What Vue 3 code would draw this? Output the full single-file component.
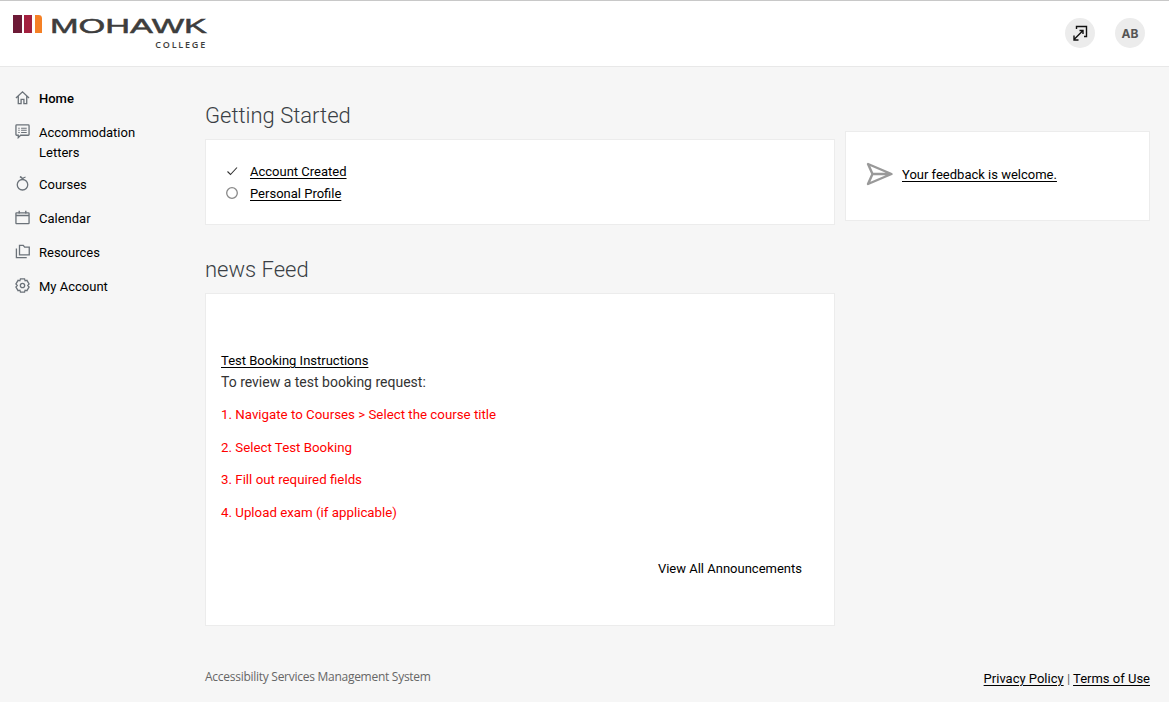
<script setup>
const nav = [
  { label: 'Home', icon: 'home', active: true },
  { label: 'Accommodation Letters', icon: 'letters' },
  { label: 'Courses', icon: 'apple' },
  { label: 'Calendar', icon: 'calendar' },
  { label: 'Resources', icon: 'folder' },
  { label: 'My Account', icon: 'gear' }
]
const steps = ['1. Navigate to Courses > Select the course title', '2. Select Test Booking', '3. Fill out required fields', '4. Upload exam (if applicable)']
</script>

<template>
  <div class="page">
    <header class="header">
      <div class="logo">
        <svg width="30" height="18" viewBox="0 0 30 18" class="bars">
          <rect x="0" y="0" width="9" height="18" fill="#6d1a36" />
          <rect x="11" y="0" width="8" height="18" fill="#a3203f" />
          <path d="M22 0h3.500a3.500 3.500 0 0 1 3.500 3.500V18h-7z" fill="#f58025" />
        </svg>
        <div class="wordmark">
          <svg width="156" height="22" viewBox="0 0 156 22" overflow="visible">
            <text x="-2" y="18" textLength="157" lengthAdjust="spacingAndGlyphs" class="mohawk">MOHAWK</text>
          </svg>
          <span class="college">COLLEGE</span>
        </div>
      </div>
      <div class="actions">
        <button class="round">
          <svg width="16" height="16" viewBox="0 0 16 16" fill="none" stroke="#111" stroke-width="1.400">
            <path d="M4.500 4V1.500h10V11.500H12" />
            <path d="M2 14.500L10.500 6M7.500 5.500H11V9M2 10.500V15H6.500" />
          </svg>
        </button>
        <button class="round initials">AB</button>
      </div>
    </header>

    <div class="body">
      <nav class="sidebar">
        <a v-for="item in nav" :key="item.label" class="nav-item" :class="{ active: item.active }">
          <svg class="nav-icon" width="15" height="15" viewBox="0 0 16 16" fill="none" stroke="#6b7279" stroke-width="1.400">
            <template v-if="item.icon === 'home'">
              <path d="M1 8.500L8 2l7 6.500M3.500 6.500V14.500h3v-4.500h3v4.500h3V6.500" />
            </template>
            <template v-else-if="item.icon === 'letters'">
              <path d="M1.800 1h12.400a.8.8 0 0 1 .8.800v9.400a.8.8 0 0 1-.8.800H6l-2.500 2.500V12H1.800a.8.800 0 0 1-.8-.8V1.800a.8.800 0 0 1 .8-.8z" />
              <path d="M3.500 4.500h1.500M6.500 4.500h6M3.500 6.700h1.500M6.500 6.700h6M3.500 9h1.500M6.500 9h6" stroke-width="1.100" />
            </template>
            <template v-else-if="item.icon === 'apple'">
              <circle cx="8" cy="9.300" r="5.600" />
              <path d="M8 3.700C8 2.500 7 1.300 5.200.8M8 3.700c.3-1.300 1.500-2.300 3.200-2.500" />
            </template>
            <template v-else-if="item.icon === 'calendar'">
              <rect x="1" y="3" width="14" height="11.500" rx=".6" />
              <path d="M1 5.800h14M4.500 .8v3M11.500 .8v3" stroke-width="1.500" />
            </template>
            <template v-else-if="item.icon === 'folder'">
              <path d="M4.800 3.200V1.500h4l1.500 1.800h4.900V11.500H4.800z" />
              <path d="M1.500 4.800V14.500H12.500" />
            </template>
            <template v-else>
              <circle cx="8" cy="8" r="2.300" />
              <path d="M5.800 1h4.400l.6 2 1.900-.5L15 6.300 13.600 8l1.400 1.700-2.300 3.800-1.900-.5-.6 2H5.800l-.6-2-1.900.5L1 9.700 2.400 8 1 6.300l2.300-3.800 1.900.5z" />
            </template>
          </svg>
          <span>{{ item.label }}</span>
        </a>
      </nav>

      <div class="content">
        <div class="columns">
          <main class="left">
            <h2 class="title">Getting Started</h2>
            <section class="card started">
              <div class="check-row">
                <svg width="12" height="12" viewBox="0 0 12 12" fill="none" stroke="#333" stroke-width="1.100" class="mark">
                  <path d="M1.500 6.500l3 3L11 2.500" />
                </svg>
                <a class="link">Account Created</a>
              </div>
              <div class="check-row">
                <svg width="12" height="12" viewBox="0 0 12 12" fill="none" stroke="#888" stroke-width="1.300" class="mark">
                  <circle cx="6" cy="6" r="5.300" />
                </svg>
                <a class="link">Personal Profile</a>
              </div>
            </section>

            <h2 class="title second">news Feed</h2>
            <section class="card news">
              <a class="link">Test Booking Instructions</a>
              <p class="intro">To review a test booking request:</p>
              <p v-for="s in steps" :key="s" class="step">{{ s }}</p>
              <div class="all"><a>View All Announcements</a></div>
            </section>
          </main>

          <aside class="card feedback">
            <svg width="28" height="24" viewBox="0 0 28 24" fill="none" stroke="#999" stroke-width="2.400" stroke-linejoin="round">
              <path d="M2 2l23.500 10L2 22l4.500-10zM6.500 12h19" />
            </svg>
            <a class="link">Your feedback is welcome.</a>
          </aside>
        </div>

        <footer class="footer">
          <span class="system">Accessibility Services Management System</span>
          <span class="legal"><a class="link">Privacy Policy</a> <i>|</i> <a class="link">Terms of Use</a></span>
        </footer>
      </div>
    </div>
  </div>
</template>

<style>
html, body { margin: 0; background: #f6f6f6; }
</style>

<style scoped>
.page {
  min-height: 702px;
  background: #f6f6f6;
  font-family: Roboto, sans-serif;
  font-size: 13px;
  color: #000;
}
.header {
  height: 65px;
  border-top: 1px solid #c8c8c8;
  border-bottom: 1px solid #e8e8e8;
  background: #fff;
  display: flex;
  justify-content: space-between;
  padding: 0 24px 0 13px;
}
.logo { display: flex; align-items: flex-start; padding-top: 14px; gap: 9px; }
.bars { display: block; }
.wordmark { display: flex; flex-direction: column; align-items: flex-end; width: 156px; }
.wordmark svg { display: block; }
.mohawk { font-family: "Liberation Sans", sans-serif; font-size: 21px; fill: #3d3d3d; stroke: #3d3d3d; stroke-width: .5px; }
.college { font-family: "Open Sans", sans-serif; font-size: 9px; font-weight: 600; letter-spacing: 1.800px; color: #3d3d3d; line-height: 12px; margin: 2px 1px 0 0; }
.actions { display: flex; gap: 20px; align-items: center; margin-top: -1px; }
.round {
  width: 30px; height: 30px; border-radius: 50%; border: 0; padding: 0;
  background: #ececec; display: flex; align-items: center; justify-content: center;
}
.initials { font-family: Inter, sans-serif; font-size: 12px; font-weight: 700; color: #555; }
.body { display: flex; }
.sidebar {
  width: 205px; flex: none; box-sizing: border-box;
  padding: 17px 40px 0 15px; display: flex; flex-direction: column; gap: 4px;
}
.nav-item {
  display: flex; gap: 9px; align-items: flex-start; line-height: 20px;
  padding: 5px 0 3px; min-height: 30px; box-sizing: border-box;
}
.nav-item.active { font-weight: 500; }
.nav-icon { flex: none; margin-top: 1px; }
.content { flex: 1; min-width: 0; padding-right: 19px; }
.columns { display: flex; gap: 10px; align-items: flex-start; }
.left { width: 630px; flex: none; }
.title {
  margin: 0; font-weight: 300; font-size: 22px; line-height: 28px; color: #3a3f45;
  padding-top: 35px; padding-bottom: 9px;
}
.title.second { padding-top: 31px; }
.card { background: #fff; border: 1px solid #ececec; box-sizing: border-box; }
.started { height: 86px; padding: 20px 0 0 20px; }
.check-row { display: flex; align-items: center; gap: 12px; height: 22px; }
.mark { flex: none; }
.link { color: #000; text-decoration: underline; text-underline-offset: 2px; }
.news { height: 333px; padding: 59px 32px 0 15px; }
.intro { margin: 4px 0 0; font-size: 14px; line-height: 20px; color: #333; }
.step { margin: 13px 0 0; color: #f00; font-size: 13.300px; line-height: 19.500px; }
.all { text-align: right; margin-top: 39px; }
.feedback {
  width: 305px; height: 90px; margin-top: 64px; display: flex; align-items: center;
  gap: 8px; padding: 0 0 4px 20px;
}
.footer {
  display: flex; justify-content: space-between; align-items: flex-start; padding-top: 42px;
}
.system { font-family: "Open Sans", sans-serif; font-size: 12px; letter-spacing: -.27px; color: #666; line-height: 18px; }
.legal { line-height: 20px; margin-top: 1px; }
.legal i { font-style: normal; color: #666; }
</style>
